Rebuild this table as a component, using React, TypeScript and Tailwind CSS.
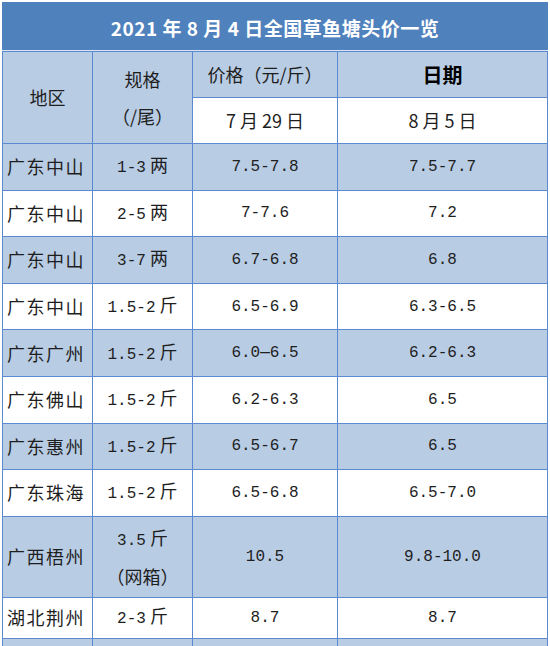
import React from "react";

const CJK = { fontFamily: '"Noto Sans CJK SC", "Noto Sans", sans-serif' };

function T({ s }: { s: string }) {
  const parts = s.split(/([0-9.\-—]+)/);
  return (
    <>
      {parts.map((p, i) =>
        /^[0-9.\-—]+$/.test(p) ? (
          <span
            key={i}
            className="text-[16px]"
            style={{ fontFamily: '"Liberation Mono", "DejaVu Sans Mono", monospace' }}
          >
            {p}
          </span>
        ) : (
          <span key={i}>{p}</span>
        )
      )}
    </>
  );
}

const rows: { region: string; spec: string[]; p1: string; p2: string }[] = [
  { region: "广东中山", spec: ["1-3 两"], p1: "7.5-7.8", p2: "7.5-7.7" },
  { region: "广东中山", spec: ["2-5 两"], p1: "7-7.6", p2: "7.2" },
  { region: "广东中山", spec: ["3-7 两"], p1: "6.7-6.8", p2: "6.8" },
  { region: "广东中山", spec: ["1.5-2 斤"], p1: "6.5-6.9", p2: "6.3-6.5" },
  { region: "广东广州", spec: ["1.5-2 斤"], p1: "6.0—6.5", p2: "6.2-6.3" },
  { region: "广东佛山", spec: ["1.5-2 斤"], p1: "6.2-6.3", p2: "6.5" },
  { region: "广东惠州", spec: ["1.5-2 斤"], p1: "6.5-6.7", p2: "6.5" },
  { region: "广东珠海", spec: ["1.5-2 斤"], p1: "6.5-6.8", p2: "6.5-7.0" },
  { region: "广西梧州", spec: ["3.5 斤", "（网箱）"], p1: "10.5", p2: "9.8-10.0" },
  { region: "湖北荆州", spec: ["2-3 斤"], p1: "8.7", p2: "8.7" },
];

export default function App() {
  return (
    <div
      className="w-[550px] h-[646px] overflow-hidden bg-white pl-[2px] pt-[2px] text-[18px] text-[#1e1e1e]"
      style={CJK}
    >
      <div className="w-[546px]">
        <div className="h-[48px] bg-[#4f81bd] flex items-center justify-center pt-[4px] text-white text-[19px] font-bold tracking-[0.5px]">
          2021 年 8 月 4 日全国草鱼塘头价一览
        </div>
        <div className="h-[1px] bg-[#dbe5f1]"></div>
        <div className="grid grid-cols-[89px_99px_144px_209px] grid-rows-[45px_45px_repeat(8,45.6px)_80.2px_40px_30px] gap-px p-px bg-[#5c8ad0]">
          <div className="row-span-2 bg-[#b8cce4] flex items-center justify-center">地区</div>
          <div className="row-span-2 bg-[#b8cce4] flex flex-col items-center justify-center leading-[37px]">
            <span>规格</span>
            <span>（/尾）</span>
          </div>
          <div className="bg-[#b8cce4] flex items-center justify-center">价格（元/斤）</div>
          <div className="bg-[#b8cce4] flex items-center justify-center font-bold text-[20px] text-black">日期</div>
          <div className="bg-white flex items-center justify-center">7 月 29 日</div>
          <div className="bg-white flex items-center justify-center">8 月 5 日</div>
          {rows.map((r, i) => {
            const bg = i % 2 === 0 ? "bg-[#b8cce4]" : "bg-white";
            return (
              <React.Fragment key={i}>
                <div className={`${bg} flex items-center pl-[4px] tracking-[1.5px]`}>{r.region}</div>
                <div className={`${bg} flex flex-col items-center justify-center leading-[35px]`}>
                  {r.spec.map((s, j) => (
                    <span key={j}>
                      <T s={s} />
                    </span>
                  ))}
                </div>
                <div className={`${bg} flex items-center justify-center`}>
                  <T s={r.p1} />
                </div>
                <div className={`${bg} flex items-center justify-center`}>
                  <T s={r.p2} />
                </div>
              </React.Fragment>
            );
          })}
          <div className="bg-[#b8cce4]"></div>
          <div className="bg-[#b8cce4]"></div>
          <div className="bg-[#b8cce4]"></div>
          <div className="bg-[#b8cce4]"></div>
        </div>
      </div>
    </div>
  );
}
